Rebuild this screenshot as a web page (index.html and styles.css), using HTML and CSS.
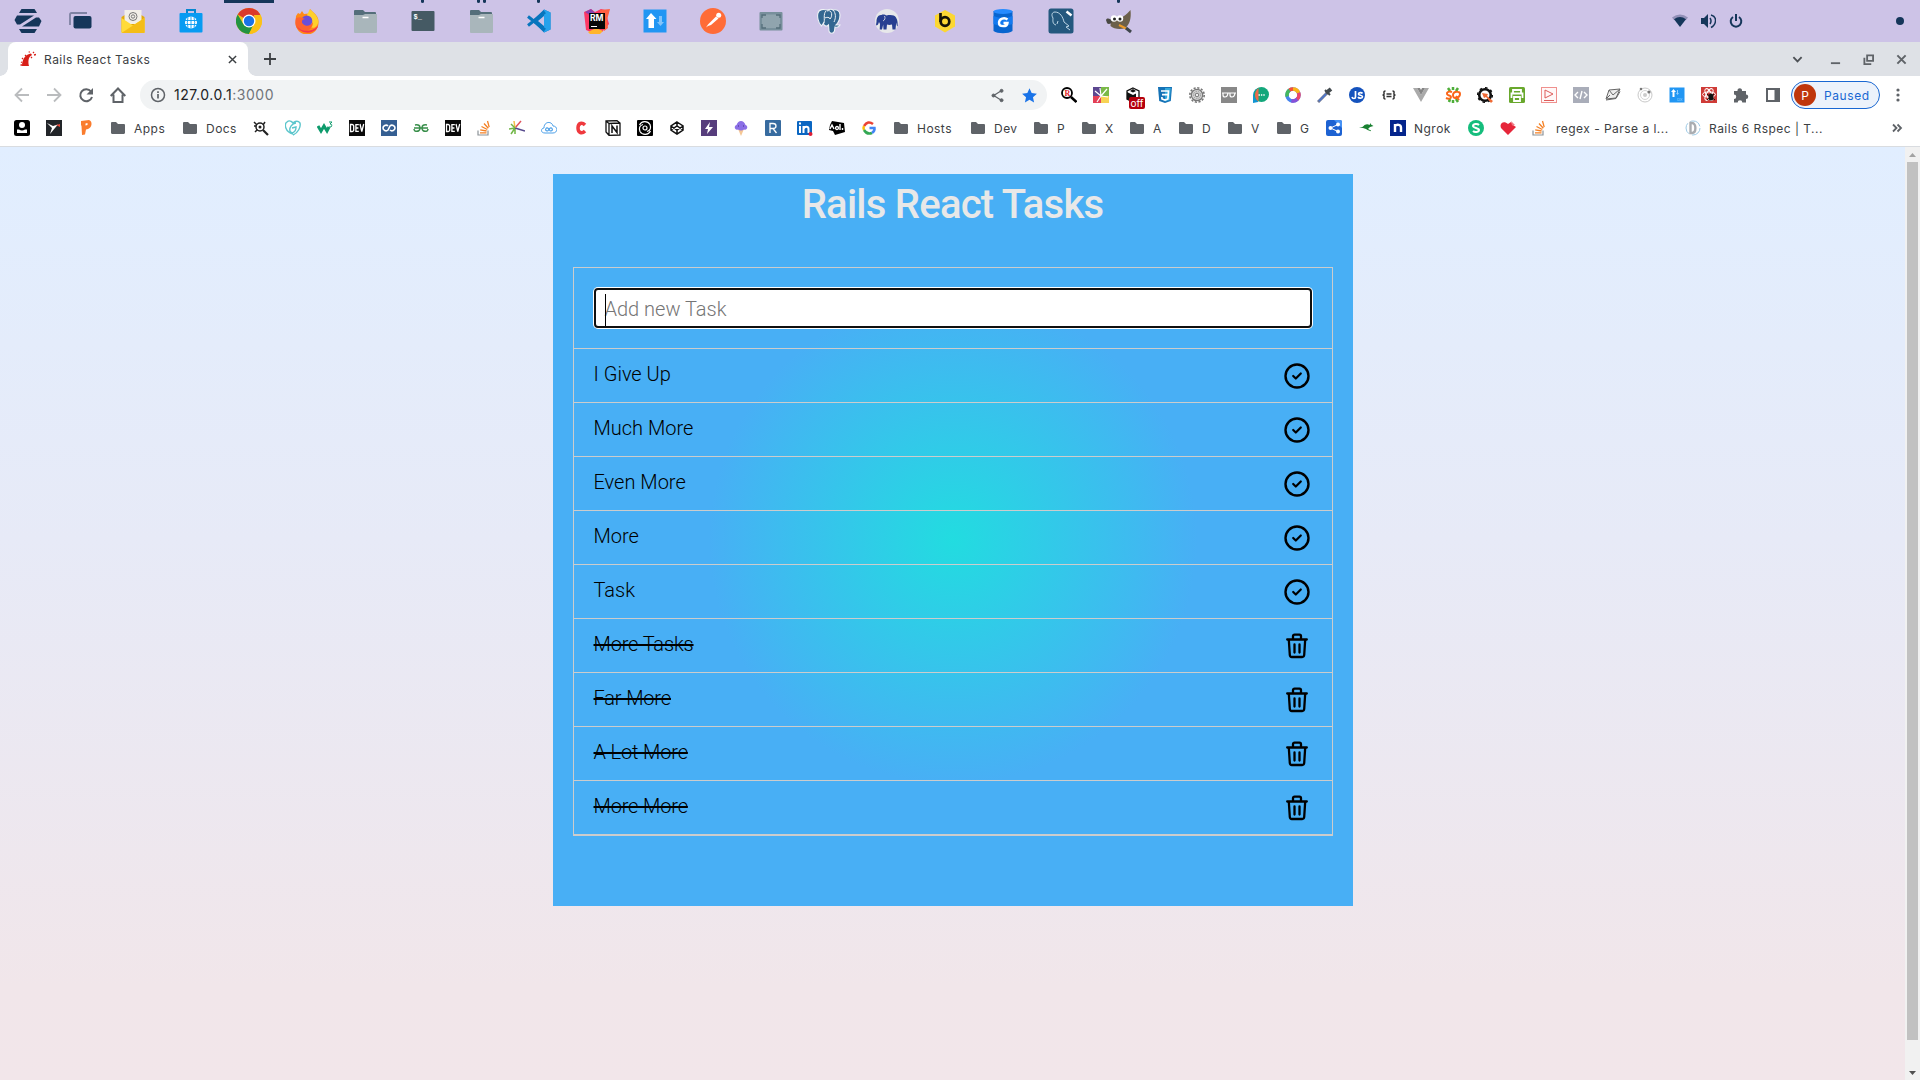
FILE: index.html
```html
<!DOCTYPE html>
<html lang="en">
<head>
<meta charset="utf-8">
<title>Rails React Tasks</title>
<link rel="stylesheet" href="styles.css">
</head>
<body>
<svg class="defs" aria-hidden="true">
  <symbol id="folder" viewBox="0 0 16 16"><path fill="#5f6368" d="M1 3.2C1 2.5 1.5 2 2.2 2H6l2 2h5.800c.7 0 1.200.5 1.200 1.200v7.600c0 .7-.5 1.200-1.200 1.200H2.200C1.500 14 1 13.500 1 12.800z"/></symbol>
  <symbol id="files" viewBox="0 0 26 26"><path fill="#546e7a" d="M2 3a1 1 0 0 1 1-1h8l2 2h10a1 1 0 0 1 1 1v5H2z"/><path fill="#a9b6bb" d="M2 7h9l2-1h12v18a1 1 0 0 1-1 1H3a1 1 0 0 1-1-1z"/><path stroke="#fff" stroke-width="1.500" d="M10.500 9.500h6"/></symbol>
  <symbol id="overflow" viewBox="0 0 16 16"><path fill="none" stroke="#8d9398" stroke-width="1.200" d="M1 10.500V15h10v-4.500"/><path stroke="#f48024" stroke-width="1.300" d="M3 12.800h6.500M3.200 9.800l6.400 1.200M4.500 6.500l5.800 3M7 3.500l4.300 4.800M10.500 1l1.700 6.200"/></symbol>
  <symbol id="dev" viewBox="0 0 16 16"><path fill="#0a0a0a" d="M0 0h16v16H0z"/><path fill="none" stroke="#fff" stroke-width="1.300" d="M1.500 4.500v7H3c1 0 1.700-.5 1.700-1.500V6C4.700 5 4 4.500 3 4.500zM9.800 4.600H6.900v6.800h2.900M6.900 8h2.500M11 4l1.800 7.500L14.700 4"/></symbol>
  <symbol id="check" viewBox="0 0 28 28"><circle cx="14" cy="14" r="11.500" fill="none" stroke="#000" stroke-width="2.400"/><path fill="none" stroke="#000" stroke-width="2.200" stroke-linecap="round" stroke-linejoin="round" d="M10.200 14l2.600 2.500 5-5"/></symbol>
  <symbol id="trash" viewBox="0 0 28 28"><g fill="none" stroke="#000" stroke-width="2.300" stroke-linecap="round" stroke-linejoin="round"><path d="M4.200 7.500h19.600M5.800 7.500l1 15.500c.1 1.200.8 2 2 2h10.400c1.200 0 1.900-.8 2-2l1-15.500M10 7V4.200c0-1 .6-1.500 1.500-1.500h5c.9 0 1.500.5 1.500 1.500V7M11.500 12.500v8M16.500 12.500v8"/></g></symbol>
</svg>

<header class="panel">
  <div class="launcher">
    <span class="app zorin"><svg viewBox="0 0 28 26"><path fill="#15365a" d="M7.500 1h13L23 5H5zM7.500 25h13L23 21H5zM3 7.500h17L6 16.500H3L.5 12zM25 18.500H8L22 9.500h3l2.500 3.500z"/></svg></span>
    <span class="app windows"><svg viewBox="0 0 26 26"><path fill="none" stroke="#7e82a3" stroke-width="1.800" d="M3 17V6.500C3 5.500 3.500 5 4.500 5H20"/><rect x="6.500" y="8" width="18" height="12.500" rx="2" fill="#15365a"/></svg></span>
    <span class="app"><svg viewBox="0 0 26 26"><path fill="#e2a90c" d="M1.500 9L13 2l11.500 7v15H1.500z"/><path fill="#f2efe8" d="M4.500 2h17v14H4.500z"/><circle cx="13" cy="8.500" r="4" fill="none" stroke="#777" stroke-width="1"/><circle cx="13" cy="8.500" r="1.700" fill="none" stroke="#777"/><path fill="#ffdb3b" d="M1.500 10L13 17.500 24.500 10v15h-23z"/><path fill="#f4bd17" d="M1.500 25L16 15.500 24.500 10v15z"/></svg></span>
    <span class="app"><svg viewBox="0 0 26 26"><path fill="none" stroke="#0587d1" stroke-width="2" d="M9 5V2h8v3"/><rect x="1.500" y="5" width="23" height="19.500" rx="1" fill="#079bf2"/><circle cx="13" cy="14.500" r="6" fill="#fff"/><path fill="none" stroke="#079bf2" stroke-width=".9" d="M7 12.500h12M7 16.500h12M13 8.500v12M10 9.500q-1.500 5 0 10M16 9.500q1.500 5 0 10"/></svg></span>
    <span class="app active"><svg viewBox="0 0 26 26"><circle cx="13" cy="13" r="13" fill="#fbc116"/><path fill="#db3a2c" d="M13 13L1.740 6.500A13 13 0 0 1 24.260 6.500z"/><path fill="#229342" d="M13 26A13 13 0 0 1 1.740 6.500L7.600 16.500 13 19l4-1.800z"/><path fill="#fbc116" d="M13 26l6-10-1-9h6.500A13 13 0 0 1 13 26z"/><circle cx="13" cy="13" r="6.500" fill="#fff"/><circle cx="13" cy="13" r="5.200" fill="#1a73e8"/></svg></span>
    <span class="app"><svg viewBox="0 0 26 26"><path fill="#ff8a16" d="M2 8l2-3 2 1 2-3 2 3 5-.5 1-4.500 3 3c4 3 6 7 5.500 11A11.500 11.500 0 0 1 1.500 15z"/><path fill="#ffd02b" d="M13 7l3-6c2 3 8 6 8.500 13-2 7-6 6-8 5z"/><circle cx="12.800" cy="13" r="5.500" fill="#6b4fd8"/><path fill="#ff632f" d="M2 10c4-2 7 0 9 1-3 0-4 3-2 5 3 3 8 2 10-2 0 6-5 10-10 9.500C3 23 0 17 2 10z"/><path fill="#f5354e" d="M2 17c3 6 14 9 22 1-2 8-17 10-22-1z"/></svg></span>
    <span class="app"><svg viewBox="0 0 26 26"><use href="#files"/></svg></span>
    <span class="app one"><svg viewBox="0 0 26 26"><rect x="1.500" y="3" width="23" height="20" rx="1" fill="#455a64"/><text x="3.500" y="11" class="prompt">$_</text></svg></span>
    <span class="app two"><svg viewBox="0 0 26 26"><use href="#files"/></svg></span>
    <span class="app one"><svg viewBox="0 0 26 26"><path fill="#0a78c1" d="M18 1.500l6.500 3v17l-6.500 3L6 13zM18 8l-6 5 6 5z" fill-rule="evenodd"/><path fill="#27a2ec" d="M18 1.500l6.500 3v17l-6.500 3z"/><path stroke="#0875bd" stroke-width="3" d="M2 8.500L19 22M2 17.500L19 4"/></svg></span>
    <span class="app"><svg viewBox="0 0 26 26"><path fill="#fd3765" d="M0 4l7-3 4 3 6-3 8 2-2 6 2 7-7 8-9 1-7-3z"/><path fill="#ffb52b" d="M4 24l8-4 7 3-3 3H6z"/><path fill="#8943b0" d="M1 4l6-3 5 5-5 2z"/><path fill="#ff6141" d="M16 2l10-1-3 11 1 8-4 3z"/><path fill="#080808" d="M5 5h16v16H5z"/><text x="6" y="13" class="rm">RM</text><path stroke="#fff" d="M7 18.500h6"/></svg></span>
    <span class="app"><svg viewBox="0 0 26 26"><path fill="#2196f3" d="M1.500 1.500h23v23h-23z"/><path fill="#fff" d="M9 5l5.500 6H12v9H6.500v-9H4z"/><path fill="#81c4fa" d="M17 8h3v6h2l-3.500 4-3.500-4h2z"/></svg></span>
    <span class="app"><svg viewBox="0 0 26 26"><circle cx="13" cy="13" r="13" fill="#ff6c37"/><path fill="#fff" d="M6 19.500l2-3 8-8 2.500 2L11 17l-3 1z"/><circle cx="18.700" cy="7.200" r="2.500" fill="#fff"/></svg></span>
    <span class="app"><svg viewBox="0 0 26 26"><rect x="1.500" y="4" width="23" height="18.500" rx="1" fill="#78909c"/><path fill="#90a4ae" d="M4 6.500h18v13.500H4z"/><path fill="none" stroke="#546e7a" stroke-width="1.300" d="M4 10V7h4M18 7h4v3M22 16v4h-4M8 20H4v-4"/></svg></span>
    <span class="app"><svg viewBox="0 0 26 26"><path fill="#336791" stroke="#eef2f6" stroke-width="1.100" d="M2 5c1-4 6-4 9-3 3-1 5-1 6 0 4-1 7 1 7 5 0 4-2 8-4 10h4c-1 2-3 2.500-5 2l-.5 4c-1 3-5 3-5.500 0l-.5-6c-2 2-5 1-5-2l-2 3C2 15 1 8 2 5z"/><path fill="none" stroke="#eef2f6" d="M10 3c-3 3-1 9-2 12M11 3c5-2 6 5 3 8 0-2-4-2-5-1M17 2c3 3 3 8 1 12"/></svg></span>
    <span class="app"><svg viewBox="0 0 26 26"><circle cx="13" cy="13" r="12" fill="#e7e8ea"/><path fill="#273f91" d="M2.500 17.500c-1-1 0-2 0-4 0-4 2-7 5-6.500 1.500-1 4 0 5 .5 4-1 8-.5 9.500 2 2 3 1.500 6 1.800 9l-1-1-.6-3-.7 7h-3l-.5-5c-2 .5-3.500.5-5 0l-.5 5h-3l-.3-5-1.200 5H5.700L6 16l-1-2c-.5 1.500-.8 3-2.500 3.500z"/><path fill="none" stroke="#e7e8ea" stroke-width=".8" d="M10.500 8c1 2 .5 4-1.500 5"/></svg></span>
    <span class="app"><svg viewBox="0 0 26 26"><path fill="#fcd732" d="M13 2l10 5.500v11L13 24.500 3 18.500v-11z"/><path fill="none" stroke="#161408" stroke-width="2.700" d="M8.500 5v9"/><circle cx="13" cy="13.500" r="4.300" fill="none" stroke="#161408" stroke-width="2.700"/></svg></span>
    <span class="app"><svg viewBox="0 0 26 26"><path fill="#0865cf" d="M3.500 3v20c4 3 15 3 19 0V3z"/><path fill="#137af0" d="M3.500 8q9.500 4 19 0v8q-9.500 4-19 0z"/><ellipse cx="13" cy="3.500" rx="9.500" ry="2.500" fill="#268bff"/><path fill="none" stroke="#fff" stroke-width="2.400" d="M17.500 11.500c-3-2.500-8.500-1-8.500 3.200 0 4.500 8 4.500 8.500.3h-4"/></svg></span>
    <span class="app"><svg viewBox="0 0 26 26"><rect x=".5" y=".5" width="25" height="25" rx="2.500" fill="#24587e"/><path fill="none" stroke="#bcd5e5" stroke-width="1" d="M8 17c-4-1-3-5-3-7-2-3-1-6 2-6 5 0 8 5 9 10l5 4-3 1 4 3M10 13l-1 3"/><path stroke="#fff" stroke-width="2.500" d="M18.500 3.500l5 4"/></svg></span>
    <span class="app one"><svg viewBox="0 0 26 26"><path fill="#6c604a" d="M5 10c8 3 14-2 19.500-8 1 9-1 14-5 18-5 2-12 1-15-2z"/><path fill="#4a4944" d="M0 12c1-3 5-1 6 1 0 3-4 4-5 2z"/><circle cx="8" cy="10.500" r="3.200" fill="#fff"/><circle cx="14" cy="10.500" r="3.200" fill="#fff"/><circle cx="8.500" cy="11" r="1.500" fill="#222"/><circle cx="14" cy="11" r="1.500" fill="#222"/><path stroke="#eb9a28" stroke-width="2" d="M13 17l8 4"/><path stroke="#3e454b" stroke-width="3" d="M20 20l5 4"/></svg></span>
  </div>
  <div class="status">
    <svg viewBox="0 0 16 16"><path fill="#9290b8" d="M0 4.500Q8-1.500 16 4.500L14 7Q8 2.500 2 7z"/><path fill="#15365a" d="M2 6.200Q8 2 14 6.200L8 14z"/></svg>
    <svg viewBox="0 0 16 16"><path fill="#15365a" d="M1 5h3l4-4v14l-4-4H1z"/><path fill="none" stroke="#15365a" stroke-width="1.500" d="M10 5q2 3 0 6M11 2q5 1.500 4.500 6T11 14.500"/></svg>
    <svg viewBox="0 0 16 16"><path fill="none" stroke="#15365a" stroke-width="2" d="M5 4a5.300 5.300 0 1 0 6 0M8 1v7"/></svg>
    <i class="notice"></i>
  </div>
</header>

<div class="tabstrip">
  <div class="tab">
    <svg viewBox="0 0 16 16"><path fill="#d81e18" d="M2 15C2 8 6 3 11 2.500l1 1.500C8 6 8 11 9 15z"/><path stroke="#d81e18" stroke-width="1.300" d="M1 11l1 .5M2 7l1 1M5 4l1 1M9 .5l.5 1M13 1l1 1M14 4l2-.5M11 6l1 1M.500 14H2"/></svg>
    <span class="tab-title">Rails React Tasks</span>
    <svg class="tab-x" viewBox="0 0 10 10"><path stroke="#3c4043" stroke-width="1.600" d="M1 1l8 8M9 1L1 9"/></svg>
  </div>
  <svg class="plus" viewBox="0 0 12 12"><path stroke="#3c4043" stroke-width="1.800" d="M6 0v12M0 6h12"/></svg>
  <div class="wm">
    <svg viewBox="0 0 12 12"><path fill="none" stroke="#4d5156" stroke-width="2" d="M1.500 3.500L6 8l4.500-4.500"/></svg>
    <svg viewBox="0 0 12 12"><path stroke="#5f6368" stroke-width="2" d="M1 10h10"/></svg>
    <svg viewBox="0 0 12 12"><path fill="none" stroke="#5f6368" stroke-width="2" d="M4.500 1.500H11v6H4.500zM1.500 4v7H9"/></svg>
    <svg viewBox="0 0 12 12"><path stroke="#5f6368" stroke-width="2.200" d="M1.500 1.500l9 9M10.500 1.500l-9 9"/></svg>
  </div>
</div>

<div class="toolbar">
  <div class="nav">
    <svg viewBox="0 0 16 16"><path fill="none" stroke="#babcbe" stroke-width="1.800" d="M15 8H2M8 1.500L1.500 8 8 14.500"/></svg>
    <svg viewBox="0 0 16 16"><path fill="none" stroke="#babcbe" stroke-width="1.800" d="M1 8h13M8 1.500L14.500 8 8 14.500"/></svg>
    <svg viewBox="0 0 16 16"><path fill="none" stroke="#5f6368" stroke-width="2" d="M13 4.500A6 6 0 1 0 14 10"/><path fill="#5f6368" d="M15 1v6.500H8.500z"/></svg>
    <svg viewBox="0 0 16 16"><path fill="none" stroke="#5f6368" stroke-width="2" d="M3.500 7.500V15h9V7.500M.700 9L8 1.500 15.300 9"/></svg>
  </div>
  <div class="omnibox">
    <svg viewBox="0 0 16 16"><circle cx="8" cy="8" r="6.500" fill="none" stroke="#5f6368" stroke-width="1.500"/><path stroke="#5f6368" stroke-width="1.700" d="M8 7v4.500M8 4.200v1.700"/></svg>
    <span class="url">127.0.0.1<span class="port">:3000</span></span>
    <svg viewBox="0 0 16 16"><g fill="#5f6368" stroke="#5f6368"><path fill="none" stroke-width="1.300" d="M12 3L4 8l8 5"/><circle cx="12.300" cy="3" r="1.600"/><circle cx="3.700" cy="8" r="1.600"/><circle cx="12.300" cy="13" r="1.600"/></g></svg>
    <svg viewBox="0 0 16 16"><path fill="#1a73e8" d="M8 .2l2.300 5.200 5.600.6-4.200 3.800 1.200 5.600L8 12.500l-4.900 2.900 1.200-5.600L.1 6l5.600-.6z"/></svg>
  </div>
  <div class="extensions">
    <svg viewBox="0 0 16 16"><circle cx="6" cy="6" r="5" fill="#fff" stroke="#000" stroke-width="1.800"/><text x="3.500" y="9" class="r-red">R</text><path stroke="#000" stroke-width="2.600" d="M10 10l5.500 5"/></svg>
    <svg viewBox="0 0 16 16"><path fill="#5c4790" d="M0 0h8v9H0z"/><path fill="#7ab948" d="M8 0h8v9H8z"/><path fill="#e33f57" d="M0 9h8v7H0z"/><path fill="#f7d354" d="M8 9h8v7H8z"/><path stroke="#fff" stroke-width="1.200" d="M8 9L2 4M8 9L7 1M8 9l6-7M8 9l7 1M8 9l-4 6"/></svg>
    <span class="badged"><svg viewBox="0 0 16 16"><path fill="#fff" stroke="#111" stroke-width="1.300" d="M8 1l6 3v8l-6 3-6-3V4z"/><path fill="#111" d="M2 5l6 3v7l-6-3zM8 8l3-1.500V11l-3 2zM5 4l3-2 3 2-3 1.500z"/></svg><b>off</b></span>
    <svg viewBox="0 0 16 16"><path fill="#1572b6" d="M1 0h14l-1.200 14L8 16l-5.800-2z"/><path fill="#33a9dc" d="M8 1h5.800l-1 12L8 14.600z"/><path fill="none" stroke="#fff" stroke-width="1.700" d="M4 4h7.500l-.6 8L8 13l-3-1-.1-2M5 7.700h6"/></svg>
    <svg viewBox="0 0 16 16"><circle cx="8" cy="8" r="7.200" fill="none" stroke="#777" stroke-width="1.600" stroke-dasharray="2.200 1.570"/><circle cx="8" cy="8" r="5.700" fill="#d2d2d2" stroke="#777" stroke-width="1.200"/><circle cx="8" cy="8" r="3.600" fill="none" stroke="#999" stroke-dasharray="1.500 1"/><circle cx="8" cy="8" r="1.800" fill="#eee" stroke="#777"/></svg>
    <svg viewBox="0 0 16 16"><path fill="#888" d="M0 0h16v16H0z"/><path fill="none" stroke="#fff" stroke-width="1.200" d="M1 6h14M2 6v2q0 2 2 2t2.500-2L7 6M9 6v2q0 2 2 2t2.500-2L14 6"/></svg>
    <svg viewBox="0 0 16 16"><path fill="#1195d3" d="M0 16V8a8 8 0 0 1 5-7v14z"/><circle cx="8.500" cy="7.500" r="7.500" fill="#13a77b"/><path fill="#e86a4d" d="M5.500 1v13.500Q2 12 2 8t3.500-7z"/><path stroke="#fff" stroke-width="1.400" stroke-dasharray="1.400 1" d="M5.500 8h7"/></svg>
    <svg viewBox="0 0 16 16"><g fill="none" stroke-width="3.500" transform="rotate(-90 8 8)"><circle cx="8" cy="8" r="6" stroke="#4684ee"/><circle cx="8" cy="8" r="6" stroke="#fcb316" stroke-dasharray="7 31"/><circle cx="8" cy="8" r="6" stroke="#ee446a" stroke-dasharray="7 31" stroke-dashoffset="-7"/><circle cx="8" cy="8" r="6" stroke="#8951d7" stroke-dasharray="6 32" stroke-dashoffset="-14"/><circle cx="8" cy="8" r="6" stroke="#45b85d" stroke-dasharray="7 31" stroke-dashoffset="-26"/><circle cx="8" cy="8" r="6" stroke="#f45236" stroke-dasharray="5 33" stroke-dashoffset="-33"/></g></svg>
    <svg viewBox="0 0 16 16"><path stroke="#6f7794" stroke-width="3" d="M1 15L10 6"/><path stroke="#4a78d1" stroke-width="1.500" d="M2 14L9 7"/><path stroke="#444b4f" stroke-width="4" d="M9 6l5-4"/><path stroke="#444b4f" stroke-width="2" d="M8 3l5 5"/></svg>
    <svg viewBox="0 0 16 16"><circle cx="8" cy="8" r="8" fill="#1452bd"/><path fill="none" stroke="#fff" stroke-width="1.700" d="M6.500 4v6c0 2-3 2-3.500 0M13.500 6.500c-1-1.500-4-1-4 .5s4 1 4 2.700-3.500 2-4.500.3"/></svg>
    <svg viewBox="0 0 16 16"><path fill="none" stroke="#333" stroke-width="1.500" d="M4.500 4Q2.500 4 3 6T1.500 8Q3.500 8 3 10t1.500 2M11.500 4q2 0 1.500 2t1.500 2Q12.500 8 13 10t-1.500 2M5.500 7h5M5.500 9.500h5"/></svg>
    <svg viewBox="0 0 16 16"><path fill="#aaa" d="M0 1h4l4 7 4-7h4L8 15z"/><path fill="#858585" d="M4 1h3l1 2 1-2h3L8 8z"/></svg>
    <svg viewBox="0 0 16 16"><path stroke="#4dae38" stroke-width="2.500" d="M3 1l2 3M8 0v3M13 1l-2 3M4 15l1-3M8 16v-3M13 15l-2-3"/><path fill="none" stroke="#fb6518" stroke-width="2" d="M7 5C4 4 1.500 5 2 7s4 1 4 3-3 2-5 1M13 5c-3-1-5 1-5 3s1 3.500 3 3 4-2 4-4-1-2-2-2M11 9l3 4"/></svg>
    <svg viewBox="0 0 16 16"><circle cx="8" cy="8" r="5.800" fill="none" stroke="#111" stroke-width="2.600"/><circle cx="8" cy="8" r="7.300" fill="none" stroke="#111" stroke-width="1.500" stroke-dasharray="2.500 3.200"/><path fill="#ef6a35" d="M5 6l6 1-1 2 6 5-2 2-5-6-2 1z"/></svg>
    <svg viewBox="0 0 16 16"><rect width="16" height="16" rx="1.500" fill="#69a82d"/><path fill="none" stroke="#fff" stroke-width="1.800" d="M4 6V3h8v3M2.500 11V6.500h11V11M5 10h6v4H5z"/></svg>
    <svg viewBox="0 0 16 16"><rect x=".5" y=".5" width="15" height="15" fill="#fff8f8" stroke="#ef918e"/><path fill="none" stroke="#dd5c5a" d="M4 3l8 4-8 4zM3 13.500h10"/></svg>
    <svg viewBox="0 0 16 16"><path fill="#a9adb9" d="M0 0h16v16H0z"/><path fill="none" stroke="#fff" stroke-width="1.400" d="M5 5L2 8l3 3M11 5l3 3-3 3M9 4l-2 8"/></svg>
    <svg viewBox="0 0 16 16"><path fill="#eee" stroke="#666" d="M4 3l11-1-4 9-10 1z"/><path fill="none" stroke="#666" d="M4 3l4 5 7-6M1 13l10-1.500 4-7M5 8l-3 3"/></svg>
    <svg viewBox="0 0 16 16"><circle cx="8" cy="8" r="7" fill="none" stroke="#c9c9c9"/><circle cx="8" cy="8" r="4.500" fill="none" stroke="#d5d5d5"/><circle cx="8" cy="8" r="2" fill="#ccc"/><circle cx="4" cy="2" r="1.300" fill="#777"/><circle cx="12" cy="5" r="1.600" fill="#777"/></svg>
    <svg viewBox="0 0 16 16"><rect x=".5" y=".5" width="15" height="15" fill="#2196f3"/><path fill="#fff" d="M4.500 2L7 5H5.500v5h-2V5H2z"/><path fill="#91d0ff" d="M8 3h1v3h1L8.500 8 7 6h1z"/><text x="8" y="14" class="dx">DX</text></svg>
    <svg viewBox="0 0 16 16"><path fill="#cf3b37" d="M0 0h16v16H0z"/><g fill="none" stroke="#fff"><ellipse cx="8" cy="7.500" rx="6.500" ry="2.600"/><ellipse cx="8" cy="7.500" rx="6.500" ry="2.600" transform="rotate(60 8 7.500)"/><ellipse cx="8" cy="7.500" rx="6.500" ry="2.600" transform="rotate(120 8 7.500)"/></g><ellipse cx="10" cy="10" rx="2.500" ry="3.500" fill="#111"/><path stroke="#111" d="M6 7l8 6M13 7l-7 6"/></svg>
    <svg viewBox="0 0 16 16"><path fill="#5f6368" d="M1 4h3.500a2.300 2.300 0 1 1 4.500 0H13v3.500a2.200 2.200 0 1 1 0 4.500v3.500H9.300a2.200 2.200 0 1 0-4.600 0H1V12a2.200 2.200 0 1 0 0-4.500z"/></svg>
    <svg viewBox="0 0 16 16"><path fill="#5f6368" fill-rule="evenodd" d="M1 1h14v14H1zM3 3v10h6.500V3z"/></svg>
  </div>
  <div class="profile"><i>P</i><span>Paused</span></div>
  <svg class="menu" viewBox="0 0 4 16"><g fill="#5f6368"><circle cx="2" cy="3" r="1.600"/><circle cx="2" cy="8" r="1.600"/><circle cx="2" cy="13" r="1.600"/></g></svg>
</div>

<div class="bookmarks">
  <svg viewBox="0 0 16 16"><rect width="16" height="16" rx="2.500"/><circle cx="8" cy="5" r="3" fill="#fff"/><path fill="#fff" d="M3 13V9.500h2q3 2 6 0h2V13z"/></svg>
  <svg viewBox="0 0 16 16"><path fill="#222529" d="M0 0h16v16H0z"/><path fill="#fff" d="M1 3l6 3 5-1.500L9 8l-5 6 2-6z"/><path fill="#e64635" d="M10 5l4-1v3z"/></svg>
  <svg viewBox="0 0 16 16"><path fill="#fa7c2d" d="M3 1l8-1c4 1 3 8-1 9l-2 .5-1 5-3 .5-.5-9L3 5z"/><path fill="#fff" d="M7.500 3.500l2-.5v2l-2 .5z"/></svg>
  <svg viewBox="0 0 16 16"><use href="#folder"/></svg><span class="bk w32">Apps</span>
  <svg viewBox="0 0 16 16"><use href="#folder"/></svg><span class="bk w31">Docs</span>
  <svg viewBox="0 0 16 16"><circle cx="7" cy="7" r="4" fill="#fff" stroke="#222" stroke-width="1.500"/><circle cx="7" cy="7" r="1.500" fill="#222"/><path fill="none" stroke="#222" stroke-width="1.500" d="M1 2l3 3M1 6h2M2 12l2.500-2.500M12 2l-2 3"/><path stroke="#222" stroke-width="2.200" d="M10 10l5 5"/></svg>
  <svg viewBox="0 0 16 16"><path fill="none" stroke="#5cc6cc" stroke-width="1.400" d="M8 14C0 12-1 4 2 2c3-3 6 1 6 1s4-4 7 0c1 4-2 10-7 12M11 3C7 3 4 8 5 11s6 2 6-4l-4 1"/></svg>
  <svg viewBox="0 0 16 16"><path fill="none" stroke="#0e9b6c" stroke-width="3" d="M1 6l3 5 3-5 3 5 2-4"/><path fill="none" stroke="#0e9b6c" d="M12 2h3l-2 2q3 0 1 3h-2"/></svg>
  <svg viewBox="0 0 16 16"><use href="#dev"/></svg>
  <svg viewBox="0 0 16 16"><path fill="#355f92" d="M0 0h16v16H0z"/><path fill="none" stroke="#fff" stroke-width="1.600" d="M7 6C5 4 2 6 2 8s3 4 5 2l2-4c2-2 5 0 5 2s-3 4-5 2"/></svg>
  <svg viewBox="0 0 16 16"><path fill="none" stroke="#388e4a" stroke-width="1.500" d="M1 8h14M2 5q5-1 5 3t-5 3q-1-1-1-2M14 5Q9 4 9 8t5 3q1-1 1-2"/></svg>
  <svg viewBox="0 0 16 16"><use href="#dev"/></svg>
  <svg viewBox="0 0 16 16"><use href="#overflow"/></svg>
  <svg viewBox="0 0 16 16"><g stroke-width="1.500"><path stroke="#70b646" d="M6 8L2 14M6 8L0 9M6 8l0 6"/><path stroke="#df535d" d="M6 8l6-7"/><path stroke="#564a8d" d="M6 8l10 3"/><path stroke="#f2be45" d="M6 8L5 1"/><path stroke="#70b646" d="M6 8L2 4"/></g></svg>
  <svg viewBox="0 0 16 16"><path fill="none" stroke="#4da0e8" d="M4 13C-1 13 0 8 3 8 3 1 11 1 12 6c5 0 5 7 0 7z"/><path fill="none" stroke="#4da0e8" stroke-width="1.200" d="M8 9.300Q6 7 5 8.500t.5 2.300T8 9.300q2-2.300 3-.8t-.5 2.300T8 9.300"/></svg>
  <svg viewBox="0 0 16 16"><path fill="none" stroke="#ef393e" stroke-width="3.500" d="M12 5C9 2 5 3 5 8s4 6 7 3"/></svg>
  <svg viewBox="0 0 16 16"><path fill="#fff" stroke="#111" stroke-width="1.300" d="M1 1l11-.3L15 3v12l-11 .3L1 12zM1 1l3 2.500v11.800M4 3.500L15 3"/><path fill="none" stroke="#111" stroke-width="1.500" d="M7 13V6l5 6.500V5.500"/></svg>
  <svg viewBox="0 0 16 16"><rect width="16" height="16" rx="1"/><circle cx="8" cy="8" r="2" fill="none" stroke="#fff" stroke-width="1.200"/><path fill="none" stroke="#fff" stroke-width="1.200" d="M2.500 5A6 6 0 0 1 13 4.500Q15 10 10 11.500M13.500 11A6 6 0 0 1 3 11.500Q1 6 6 4.500"/></svg>
  <svg viewBox="0 0 16 16"><path fill="none" stroke="#111" stroke-width="1.500" d="M8 2l6 4v4l-6 4-6-4V6zM2 6l6 4 6-4M2 10l6-4 6 4M8 2v4M8 10v4"/></svg>
  <svg viewBox="0 0 16 16"><path fill="#563d7c" d="M0 0h16v16H0z"/><path fill="#fff" d="M9 2L4 9h3l-1 5 6-7H8z"/></svg>
  <svg viewBox="0 0 16 16"><path fill="#f5c795" d="M5 9h6l-3 7z"/><path fill="#8b6fe6" d="M2 8.500q-1-2.500 1.500-3.500Q5 1 8 1t4.500 4q2.500 1 1.500 3.500-1.500 2-3 1-3 2-6 0-1.500 1-3-1z"/><path stroke="#443185" d="M5 6h1M10 6h1"/></svg>
  <svg viewBox="0 0 16 16"><rect width="16" height="16" rx="1" fill="#376b9f"/><path fill="none" stroke="#fff" stroke-width="1.300" d="M5 13V3.500h3c4 0 4 5 0 5H5M8 8.500l3.500 4.500"/></svg>
  <svg viewBox="0 0 16 16"><rect y="1" width="15" height="14" rx="1" fill="#0a66c2"/><path fill="none" stroke="#fff" stroke-width="2" d="M3 6v7M3 2.500v2M6.500 13V6M6.500 9c1-3 5-3 5 0v4"/><circle cx="13.500" cy="14" r="2" fill="#df1d35"/></svg>
  <svg viewBox="0 0 16 16"><path d="M3 1l12 2 1 9-10 3-2-4-4-1 1-5z"/><path fill="none" stroke="#fff" stroke-width="1.400" d="M1 9l2-4 2 4M11 4v6M13.500 8v2"/><circle cx="8" cy="8" r="1.500" fill="none" stroke="#fff" stroke-width="1.300"/></svg>
  <svg viewBox="0 0 16 16"><g fill="none" stroke-width="2.500"><path stroke="#ea4335" d="M3 6Q7 0 12 4"/><path stroke="#fbbc05" d="M3 6q-1 2 0 4"/><path stroke="#34a853" d="M3 10q3 5 8 3"/><path stroke="#4285f4" d="M11 13q3-2 2.500-5H8.500"/></g></svg>
  <svg viewBox="0 0 16 16"><use href="#folder"/></svg><span class="bk w37">Hosts</span>
  <svg viewBox="0 0 16 16"><use href="#folder"/></svg><span class="bk w23">Dev</span>
  <svg viewBox="0 0 16 16"><use href="#folder"/></svg><span class="bk w8">P</span>
  <svg viewBox="0 0 16 16"><use href="#folder"/></svg><span class="bk w8">X</span>
  <svg viewBox="0 0 16 16"><use href="#folder"/></svg><span class="bk w9">A</span>
  <svg viewBox="0 0 16 16"><use href="#folder"/></svg><span class="bk w9">D</span>
  <svg viewBox="0 0 16 16"><use href="#folder"/></svg><span class="bk w9">V</span>
  <svg viewBox="0 0 16 16"><use href="#folder"/></svg><span class="bk w10">G</span>
  <svg viewBox="0 0 16 16"><rect width="16" height="16" rx="2" fill="#1d62d2"/><path fill="#4692f5" d="M8 0h6q2 0 2 2v6z"/><path fill="none" stroke="#fff" d="M12 4.500L4.500 8l7.500 3.500"/><circle cx="4.500" cy="8" r="2" fill="#fff"/><circle cx="12" cy="4.500" r="2" fill="#fff"/><circle cx="12" cy="11.500" r="2" fill="#fff"/></svg>
  <svg viewBox="0 0 16 16"><path fill="#188030" d="M1 7.500q4 0 5.500-2.500 3-1.500 5 0l1-2 .5 1.500 2.500 1.500-3.500 1-2 2 3 1.500v.7L9.500 10 8 9 5 8z"/></svg>
  <svg viewBox="0 0 16 16"><path fill="#04258c" d="M0 0h16v16H0z"/><path fill="none" stroke="#fff" stroke-width="2.400" d="M5 12V4M5 6c2-2 6-1.500 6 1.500V12"/></svg><span class="bk w38">Ngrok</span>
  <svg viewBox="0 0 16 16"><circle cx="8" cy="8" r="8" fill="#15bd7c"/><path fill="none" stroke="#fff" stroke-width="2" d="M11 5C9 3 5 4 5 6s6 2 6 4-4 3-6 1"/></svg>
  <svg viewBox="0 0 16 16"><path fill="#e6263a" d="M8 15L1 8C-1 3 4 0 8 4l3-2 2 3 3 2z"/><path fill="#f07b84" d="M11 1l4 4-3 .5z"/></svg>
  <svg viewBox="0 0 16 16"><use href="#overflow"/></svg><span class="bk w113">regex - Parse a l...</span>
  <svg viewBox="0 0 16 16"><circle cx="8" cy="8" r="7" fill="none" stroke="#9cc9e5" stroke-dasharray="12 3"/><path fill="none" stroke="#aaadb1" stroke-width="2.400" d="M5.500 3v10H7c4.500 0 4.500-10 0-10z"/></svg><span class="bk w114">Rails 6 Rspec | T...</span>
  <svg class="more" viewBox="0 0 16 16"><path fill="none" stroke="#5f6368" stroke-width="1.800" d="M4 4.500L7.500 8 4 11.500M8.500 4.500L12 8l-3.500 3.500"/></svg>
</div>

<div class="viewport">
  <main class="page">
    <section class="card">
      <h1>Rails React Tasks</h1>
      <div class="table">
        <div class="form"><div class="field"><i class="caret"></i>Add new Task</div></div>
        <div class="row"><span>I Give Up</span><svg><use href="#check"/></svg></div>
        <div class="row"><span>Much More</span><svg><use href="#check"/></svg></div>
        <div class="row"><span>Even More</span><svg><use href="#check"/></svg></div>
        <div class="row"><span>More</span><svg><use href="#check"/></svg></div>
        <div class="row"><span>Task</span><svg><use href="#check"/></svg></div>
        <div class="row"><s>More Tasks</s><svg><use href="#trash"/></svg></div>
        <div class="row"><s>Far More</s><svg><use href="#trash"/></svg></div>
        <div class="row"><s>A Lot More</s><svg><use href="#trash"/></svg></div>
        <div class="row"><s>More More</s><svg><use href="#trash"/></svg></div>
      </div>
    </section>
  </main>
  <div class="scrollbar">
    <svg viewBox="0 0 7 4"><path fill="#a3a3a3" d="M0 4L3.500 0 7 4z"/></svg>
    <i class="thumb"></i>
    <svg viewBox="0 0 7 4"><path fill="#505050" d="M0 0l3.500 4L7 0z"/></svg>
  </div>
</div>
</body>
</html>
```

FILE: styles.css
```css
* { box-sizing: border-box; }
body {
  margin: 0;
  width: 1920px;
  height: 1080px;
  overflow: hidden;
  display: flex;
  flex-direction: column;
  font-family: Inter, "Noto Sans", sans-serif;
  color: #3c4043;
}
svg { display: block; flex: none; }
i, b { font-style: normal; font-weight: 400; }
.defs { position: absolute; width: 0; height: 0; }

/* desktop panel */
.panel { height: 42px; background: #cdc3e7; display: flex; justify-content: space-between; }
.launcher { display: flex; }
.app { position: relative; width: 58px; display: flex; align-items: center; justify-content: center; }
.app svg { width: 26px; height: 26px; }
.app.zorin { width: 56px; }
.app.zorin svg { width: 28px; }
.app.windows { width: 48px; }
.app.active::before { content: ""; position: absolute; top: 0; left: 4px; width: 50px; height: 3px; background: #15365a; }
.app.one::before, .app.two::before { content: ""; position: absolute; top: -1px; left: 27px; width: 3px; height: 4px; border-radius: 2px; background: #15365a; }
.app.two::before { left: 25px; box-shadow: 6px 0 #15365a; }
.prompt { font: 700 7px "Liberation Mono", monospace; fill: #fff; }
.rm { font: 700 8.500px Inter, sans-serif; fill: #fff; }
.status { display: flex; align-items: center; gap: 12px; padding-right: 16px; }
.status svg { width: 16px; height: 16px; }
.notice { width: 8px; height: 8px; border-radius: 4px; background: #15365a; margin-left: 140px; }

/* tab strip */
.tabstrip { height: 34px; background: #dee1e6; display: flex; align-items: center; padding-left: 8px; }
.tab { position: relative; width: 240px; height: 34px; background: #fff; border-radius: 8px 8px 0 0; display: flex; align-items: center; padding: 0 11px 0 12px; }
.tab::before, .tab::after { content: ""; position: absolute; bottom: 0; width: 8px; height: 8px; }
.tab::before { left: -8px; background: radial-gradient(circle at 0 0, transparent 7.500px, #fff 8px); }
.tab::after { right: -8px; background: radial-gradient(circle at 100% 0, transparent 7.500px, #fff 8px); }
.tab svg { width: 16px; height: 16px; }
.tab .tab-x { width: 9px; height: 9px; margin-left: auto; }
.tab-title { font-size: 12px; margin-left: 8px; letter-spacing: .47px; }
.plus { width: 12px; height: 12px; margin-left: 16px; }
.wm { margin-left: auto; display: flex; gap: 22px; padding-right: 13px; }
.wm svg { width: 11px; height: 11px; }
.wm svg:first-child { margin-right: 5px; }

/* toolbar */
.toolbar { height: 38px; background: #fff; display: flex; align-items: center; padding-left: 14px; }
.nav { display: flex; gap: 16px; width: 126px; }
.nav svg { width: 16px; height: 16px; }
.omnibox { width: 907px; height: 30px; border-radius: 15px; background: #f1f3f4; display: flex; align-items: center; padding: 0 10px; }
.omnibox svg { width: 15px; height: 15px; margin-left: 17px; }
.omnibox svg:first-child { width: 16px; height: 16px; margin-left: 0; }
.url { flex: 1; margin-left: 8px; padding-bottom: 1px; font-size: 14px; letter-spacing: .55px; color: #202124; }
.port { color: #70757a; }
.extensions { display: flex; gap: 16px; margin-left: 14px; }
.extensions svg { width: 16px; height: 16px; }
.badged { position: relative; }
.badged b { position: absolute; left: 4px; top: 10px; width: 16px; height: 12px; border-radius: 2px; background: #b5000c; color: #fff; font-size: 10px; line-height: 12px; text-align: center; }
.r-red { font: 700 8px "Liberation Serif", serif; fill: #e01c25; }
.dx { font: 4px Inter, sans-serif; fill: #91d0ff; }
.profile { margin-left: 10px; width: 89px; height: 28px; border: 1px solid #1967d2; border-radius: 14px; background: #ecf2fb; color: #1967d2; display: flex; align-items: center; padding-left: 2px; font-size: 12px; letter-spacing: .6px; }
.profile i { width: 22px; height: 22px; border-radius: 11px; background: #bf360c; color: #fff; display: flex; align-items: center; justify-content: center; margin-right: 8px; letter-spacing: 0; }
.menu { width: 4px; height: 16px; margin-left: 16px; }

/* bookmarks bar */
.bookmarks { height: 33px; background: #fff; border-bottom: 1px solid #d9dce0; display: flex; align-items: center; gap: 16px; padding: 0 15px 4px 14px; }
.bookmarks svg { width: 16px; height: 16px; }
.bk { margin-left: -8px; padding-top: 1px; font-size: 12px; line-height: 16px; letter-spacing: .47px; white-space: nowrap; }
.w8 { width: 8px; } .w9 { width: 9px; } .w10 { width: 10px; } .w23 { width: 23px; }
.w31 { width: 31px; } .w32 { width: 32px; } .w37 { width: 37px; } .w38 { width: 38px; }
.w113 { width: 113px; } .w114 { width: 114px; }
.bookmarks .more { margin-left: auto; }

/* page */
.viewport { flex: 1; display: flex; }
.page { flex: 1; display: flex; justify-content: center; align-items: flex-start; padding-top: 27px; background: linear-gradient(#e1eeff, #e7eaf7 42%, #f1e6ea 90%, #f2e6ea); }
.card { width: 800px; height: 732px; padding: 0 20px; color: #000; background: radial-gradient(circle, #22dce0 0%, #48aff5 45%); font-family: Roboto, "Open Sans", sans-serif; }
h1 { margin: 0; height: 93px; padding-top: 8px; font-size: 40px; line-height: 46px; font-weight: 500; color: #e8e8e8; text-align: center; letter-spacing: -.75px; }
.table { border: 1px solid #ccc; }
.form { height: 80px; padding: 20px 20px 0; }
.field { position: relative; width: 718px; height: 40px; background: #fff; border: 2px solid #101010; border-radius: 4px; box-shadow: 0 0 0 1px #fff; padding-left: 9px; font-size: 20px; line-height: 38px; font-weight: 300; color: #757575; }
.caret { position: absolute; left: 9px; top: 4px; width: 1px; height: 32px; background: #000; }
.row { height: 54px; border-top: 1px solid #ccc; display: flex; align-items: flex-start; justify-content: space-between; padding: 13px 21px 0 20px; font-size: 20px; line-height: 24px; font-weight: 300; }
.row:last-child { height: 55px; border-bottom: 1px solid #ccc; }
.row s { text-decoration-thickness: 2px; letter-spacing: -.15px; }
.row svg { width: 28px; height: 28px; }

.scrollbar { width: 15px; background: #f1f1f1; display: flex; flex-direction: column; align-items: center; padding: 6px 0 5px; }
.scrollbar svg { width: 7px; height: 4px; }
.thumb { width: 11px; height: 878px; background: #c1c1c1; margin: 5px 0 auto; }
```
